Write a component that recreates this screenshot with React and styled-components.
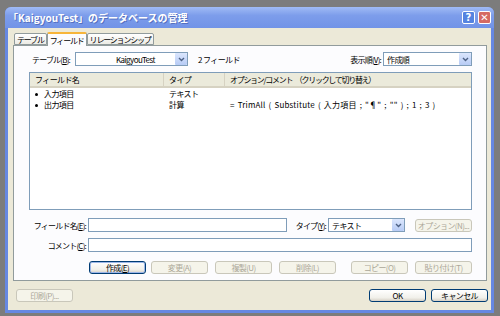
import styled, { createGlobalStyle } from "styled-components";

const GlobalStyle = createGlobalStyle`
  body {
    margin: 0;
    background: #7c7c7c;
    font-family: "Noto Sans CJK JP", "Noto Sans", sans-serif;
  }
`;

const Screen = styled.div`
  width: 500px;
  height: 316px;
  box-sizing: border-box;
  padding: 7px 6px 0 5px;
  background: #7c7c7c;
`;

const Window = styled.div`
  width: 489px;
  height: 306px;
  box-sizing: border-box;
  display: flex;
  flex-direction: column;
  padding: 0 3px 3px 3px;
  background: #6688e2;
  border-radius: 6px 6px 0 0;
`;

const TitleBar = styled.div`
  height: 21px;
  display: flex;
  align-items: center;
  padding-left: 3px;
  color: #fff;
  font-size: 10px;
  font-weight: bold;
  background: linear-gradient(#a0bbf5, #7d9deb 40%, #7193e7);
  margin: 0 -3px;
  padding-right: 3px;
  border-radius: 6px 6px 0 0;
`;

const Title = styled.span`
  flex: 1;
  text-shadow: 1px 1px 0 #5570c0;
`;

const CaptionBtn = styled.div`
  width: 13px;
  height: 13px;
  box-sizing: border-box;
  margin-left: 3px;
  border: 1px solid #fff;
  border-radius: 2px;
  display: flex;
  align-items: center;
  justify-content: center;
  color: #fff;
  font: bold 10px "DejaVu Sans", sans-serif;
  background: ${(p) => (p.$close ? "#d56a62" : "#5583e0")};
`;

const Body = styled.div`
  flex: 1;
  background: #ece9d8;
  display: flex;
  flex-direction: column;
  padding: 3px 3px 0 5px;
  font-size: 8px;
  letter-spacing: -0.6px;
  color: #000;
`;

const TabRow = styled.div`
  display: flex;
  align-items: flex-end;
  height: 14px;
  margin-left: 1px;
`;

const Tab = styled.div`
  height: ${(p) => (p.$active ? 14 : 12)}px;
  box-sizing: border-box;
  padding: 0 2px;
  display: flex;
  align-items: center;
  letter-spacing: -1.2px;
  border: 1px solid #919b9c;
  border-bottom: ${(p) => (p.$active ? "none" : "1px solid #919b9c")};
  border-top: ${(p) => (p.$active ? "2px solid #f7b53a" : "1px solid #919b9c")};
  background: ${(p) => (p.$active ? "#fcfcfe" : "linear-gradient(#fff, #ecebe5)")};
  border-radius: 2px 2px 0 0;
  margin-bottom: ${(p) => (p.$active ? -1 : 0)}px;
  position: relative;
  z-index: ${(p) => (p.$active ? 1 : 0)};
`;

const Panel = styled.div`
  width: 474px;
  height: 236px;
  box-sizing: border-box;
  border: 1px solid #919b9c;
  background: #fcfcfe;
  padding: 6px 14px 0 15px;
  display: flex;
  flex-direction: column;
`;

const Row = styled.div`
  display: flex;
  align-items: center;
  height: 14px;
  margin-top: ${(p) => p.$mt || 0}px;
`;

const Label = styled.div`
  width: ${(p) => p.$w}px;
  flex: none;
  display: flex;
  justify-content: ${(p) => (p.$right ? "flex-end" : "flex-start")};
  padding: 0 2px 0 3px;
  box-sizing: border-box;
  white-space: nowrap;
  letter-spacing: -0.8px;
`;

const Combo = styled.div`
  width: ${(p) => p.$w}px;
  flex: none;
  height: 14px;
  box-sizing: border-box;
  border: 1px solid #7f9db9;
  background: #fff;
  display: flex;
  align-items: center;
  padding-left: ${(p) => p.$pl || 3}px;
`;

const ComboText = styled.span`
  flex: 1;
`;

const Drop = styled.div`
  width: 12px;
  height: 12px;
  background: linear-gradient(#dbe6fd, #b7cbf5);
  border-radius: 1px;
  display: flex;
  align-items: center;
  justify-content: center;
`;

const Chevron = () => (
  <svg width="7" height="5" viewBox="0 0 7 5">
    <path d="M1 1 L3.5 3.5 L6 1" stroke="#4d6185" strokeWidth="1.4" fill="none" />
  </svg>
);

const Count = styled.div`
  margin-left: 10px;
  flex: 1;
`;

const ListBox = styled.div`
  margin-top: 6px;
  height: 138px;
  border: 1px solid #7f9db9;
  background: #fff;
  box-sizing: border-box;
`;

const ListHeader = styled.div`
  display: grid;
  grid-template-columns: 134px 61px 1fr;
  height: 13px;
  background: #ebeadb;
  border-bottom: 2px solid #d6d2c2;
`;

const HeadCell = styled.div`
  padding-left: 5px;
  display: flex;
  align-items: center;
  white-space: nowrap;
  border-right: 1px solid #d6d2c2;
  letter-spacing: ${(p) => (p.$tight ? "-1.3px" : "inherit")};
  &:last-child {
    border-right: none;
  }
`;

const ListRow = styled.div`
  display: grid;
  grid-template-columns: 134px 61px 1fr;
  height: 11px;
  align-items: center;
  &:first-of-type {
    margin-top: 1px;
  }
`;

const Cell = styled.div`
  padding-left: 5px;
  white-space: nowrap;
`;

const Formula = styled(Cell)`
  letter-spacing: 0.2px;
  word-spacing: 1px;
`;

const Bullet = styled.span`
  display: inline-block;
  width: 3px;
  height: 3px;
  background: #000;
  border-radius: 50%;
  margin: 0 6px 1px 0;
  vertical-align: middle;
`;

const Input = styled.div`
  width: ${(p) => (p.$w ? p.$w + "px" : "auto")};
  flex: ${(p) => (p.$w ? "none" : 1)};
  height: 14px;
  box-sizing: border-box;
  border: 1px solid #7f9db9;
  background: #fff;
`;

const Button = styled.div`
  width: 57px;
  height: 13px;
  flex: none;
  box-sizing: border-box;
  margin-left: ${(p) => p.$ml || 0}px;
  border: 1px solid ${(p) => (p.$off ? "#c9c7ba" : "#003c74")};
  border-radius: 3px;
  color: ${(p) => (p.$off ? "#aca899" : "#000")};
  background: ${(p) => (p.$off ? "#f5f4ea" : "linear-gradient(#fff, #f1f0ea 70%, #d6d0c5)")};
  box-shadow: ${(p) => (p.$def ? "inset 0 0 0 1px #9db7e8" : "none")};
  display: flex;
  align-items: center;
  justify-content: center;
  white-space: nowrap;
`;

const Footer = styled.div`
  display: flex;
  align-items: center;
  height: 29px;
  padding-left: 3px;
`;

const Spacer = styled.div`
  flex: 1;
`;

export default function App() {
  return (
    <Screen>
      <GlobalStyle />
      <Window>
        <TitleBar>
          <Title>「KaigyouTest」のデータベースの管理</Title>
          <CaptionBtn>?</CaptionBtn>
          <CaptionBtn $close>✕</CaptionBtn>
        </TitleBar>
        <Body>
          <TabRow>
            <Tab>テーブル</Tab>
            <Tab $active>フィールド</Tab>
            <Tab>リレーションシップ</Tab>
          </TabRow>
          <Panel>
            <Row>
              <Label $w={46}>テーブル(<u>B</u>):</Label>
              <Combo $w={113} $pl={40}>
                <ComboText>KaigyouTest</ComboText>
                <Drop><Chevron /></Drop>
              </Combo>
              <Count>2 フィールド</Count>
              <Label $w={50} $right>表示順(<u>V</u>):</Label>
              <Combo $w={89}>
                <ComboText>作成順</ComboText>
                <Drop><Chevron /></Drop>
              </Combo>
            </Row>
            <ListBox>
              <ListHeader>
                <HeadCell>フィールド名</HeadCell>
                <HeadCell>タイプ</HeadCell>
                <HeadCell $tight>オプション/コメント　（クリックして切り替え）</HeadCell>
              </ListHeader>
              <ListRow>
                <Cell><Bullet />入力項目</Cell>
                <Cell>テキスト</Cell>
                <Cell />
              </ListRow>
              <ListRow>
                <Cell><Bullet />出力項目</Cell>
                <Cell>計算</Cell>
                <Formula>= TrimAll ( Substitute ( 入力項目 ; "¶" ; "" ) ; 1 ; 3 )</Formula>
              </ListRow>
            </ListBox>
            <Row $mt={8}>
              <Label $w={59} $right>フィールド名(<u>E</u>):</Label>
              <Input $w={199} />
              <Label $w={41} $right>タイプ(<u>Y</u>):</Label>
              <Combo $w={77}>
                <ComboText>テキスト</ComboText>
                <Drop><Chevron /></Drop>
              </Combo>
              <Button $off $ml={10}>オプション(N)...</Button>
            </Row>
            <Row $mt={6}>
              <Label $w={59} $right>コメント(<u>C</u>):</Label>
              <Input />
            </Row>
            <Row $mt={8}>
              <Button $def $ml={60}>作成(<u>E</u>)</Button>
              <Button $off $ml={5}>変更(A)</Button>
              <Button $off $ml={7}>複製(U)</Button>
              <Button $off $ml={7}>削除(L)</Button>
              <Button $off $ml={15}>コピー(O)</Button>
              <Button $off $ml={7}>貼り付け(T)</Button>
            </Row>
          </Panel>
          <Footer>
            <Button $off>印刷(P)...</Button>
            <Spacer />
            <Button>OK</Button>
            <Button $ml={5}>キャンセル</Button>
          </Footer>
        </Body>
      </Window>
    </Screen>
  );
}
